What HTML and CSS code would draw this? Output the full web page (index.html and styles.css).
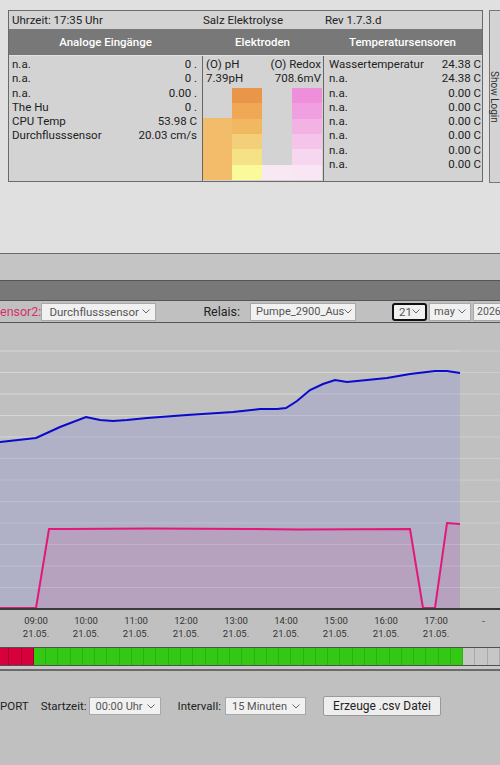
FILE: index.html
```html
<!DOCTYPE html>
<html lang="de">
<head>
    <meta charset="UTF-8">
    <meta name="viewport" content="width=device-width, initial-scale=1.0">
    <title>Salz Elektrolyse</title>
    <link rel="stylesheet" href="styles.css">
</head>
<body>

<div class="top">
    <div class="panel">
        <div class="info">
            <div class="c1">Uhrzeit: 17:35 Uhr</div>
            <div class="c2">Salz Elektrolyse</div>
            <div class="c3">Rev 1.7.3.d</div>
        </div>
        <div class="heads">
            <div>Analoge Eingänge</div>
            <div>Elektroden</div>
            <div>Temperatursensoren</div>
        </div>
        <div class="body">
            <div class="col analog">
                <div class="row"><span>n.a.</span><span>0 .</span></div>
                <div class="row"><span>n.a.</span><span>0 .</span></div>
                <div class="row"><span>n.a.</span><span>0.00 .</span></div>
                <div class="row"><span>The Hu</span><span>0 .</span></div>
                <div class="row"><span>CPU Temp</span><span>53.98 C</span></div>
                <div class="row"><span>Durchflusssensor</span><span>20.03 cm/s</span></div>
            </div>
            <div class="col electro">
                <div class="row"><span>(O) pH</span><span>(O) Redox</span></div>
                <div class="row"><span>7.39pH</span><span>708.6mV</span></div>
                <div class="bars">
                    <div class="value ph" style="height: 62px"></div>
                    <div class="scale">
                        <div class="ph1"></div><div class="ph2"></div><div class="ph3"></div>
                        <div class="ph4"></div><div class="ph5"></div><div class="ph6"></div>
                    </div>
                    <div class="value rx" style="height: 15px"></div>
                    <div class="scale">
                        <div class="rx1"></div><div class="rx2"></div><div class="rx3"></div>
                        <div class="rx4"></div><div class="rx5"></div><div class="rx6"></div>
                    </div>
                </div>
            </div>
            <div class="col temp">
                <div class="row"><span>Wassertemperatur</span><span>24.38 C</span></div>
                <div class="row"><span>n.a.</span><span>24.38 C</span></div>
                <div class="row"><span>n.a.</span><span>0.00 C</span></div>
                <div class="row"><span>n.a.</span><span>0.00 C</span></div>
                <div class="row"><span>n.a.</span><span>0.00 C</span></div>
                <div class="row"><span>n.a.</span><span>0.00 C</span></div>
                <div class="row"><span>n.a.</span><span>0.00 C</span></div>
                <div class="row"><span>n.a.</span><span>0.00 C</span></div>
            </div>
        </div>
    </div>
    <div class="login">Show Login</div>
</div>

<div class="band1"></div>
<div class="band2"></div>

<div class="toolbar">
    <span class="sensor-label">ensor2:</span>
    <div class="select sel-sensor"><span>Durchflusssensor</span><svg width="8" height="5"><polyline points="0.5,0.5 4,4 7.5,0.5"/></svg></div>
    <span class="relais-label">Relais:</span>
    <div class="select sel-relais"><span>Pumpe_2900_Aus</span><svg width="8" height="5"><polyline points="0.5,0.5 4,4 7.5,0.5"/></svg></div>
    <div class="select sel-day"><span>21</span><svg width="8" height="5"><polyline points="0.5,0.5 4,4 7.5,0.5"/></svg></div>
    <div class="select sel-month"><span>may</span><svg width="8" height="5"><polyline points="0.5,0.5 4,4 7.5,0.5"/></svg></div>
    <div class="select sel-year"><span>2026</span></div>
</div>

<svg class="chart" width="500" height="287" viewBox="0 0 500 287">
    <g class="grid">
        <line x1="0" y1="28" x2="500" y2="28"/>
        <line x1="0" y1="49.5" x2="500" y2="49.5"/>
        <line x1="0" y1="71" x2="500" y2="71"/>
        <line x1="0" y1="92.5" x2="500" y2="92.5"/>
        <line x1="0" y1="114" x2="500" y2="114"/>
        <line x1="0" y1="135.5" x2="500" y2="135.5"/>
        <line x1="0" y1="157" x2="500" y2="157"/>
        <line x1="0" y1="178.5" x2="500" y2="178.5"/>
        <line x1="0" y1="200" x2="500" y2="200"/>
        <line x1="0" y1="221.5" x2="500" y2="221.5"/>
        <line x1="0" y1="243" x2="500" y2="243"/>
        <line x1="0" y1="264.5" x2="500" y2="264.5"/>
    </g>
    <polygon class="fill-blue" points="0,119 36,115 60,104 86,94 100,97 113,98 127,97 147,95 187,92 233,89 260,86 277,86 286,85 297,78 310,67 323,61 335,57 347,59 367,57 387,55 410,51 435,48 447,48 460,50 460,286 0,286"/>
    <polygon class="fill-pink" points="0,286 36,286 49,206 67,206 150,205.5 250,206 300,206.5 410,206 423,286 435,286 447,200 460,201 460,286"/>
    <g class="grid grid-over">
        <line x1="0" y1="28" x2="460" y2="28"/>
        <line x1="0" y1="49.5" x2="460" y2="49.5"/>
        <line x1="0" y1="71" x2="460" y2="71"/>
        <line x1="0" y1="92.5" x2="460" y2="92.5"/>
        <line x1="0" y1="114" x2="460" y2="114"/>
        <line x1="0" y1="135.5" x2="460" y2="135.5"/>
        <line x1="0" y1="157" x2="460" y2="157"/>
        <line x1="0" y1="178.5" x2="460" y2="178.5"/>
        <line x1="0" y1="200" x2="460" y2="200"/>
        <line x1="0" y1="221.5" x2="460" y2="221.5"/>
        <line x1="0" y1="243" x2="460" y2="243"/>
        <line x1="0" y1="264.5" x2="460" y2="264.5"/>
    </g>
    <polyline class="line-blue" points="0,119 36,115 60,104 86,94 100,97 113,98 127,97 147,95 187,92 233,89 260,86 277,86 286,85 297,78 310,67 323,61 335,57 347,59 367,57 387,55 410,51 435,48 447,48 460,50"/>
    <polyline class="line-pink" points="0,285 36,285 49,206 67,206 150,205.5 250,206 300,206.5 410,206 423,285 435,285 447,200 460,201"/>
    <line class="baseline" x1="0" y1="286" x2="500" y2="286"/>
</svg>

<div class="axis">
    <div class="tick"><span>09:00</span><span>21.05.</span></div>
    <div class="tick"><span>10:00</span><span>21.05.</span></div>
    <div class="tick"><span>11:00</span><span>21.05.</span></div>
    <div class="tick"><span>12:00</span><span>21.05.</span></div>
    <div class="tick"><span>13:00</span><span>21.05.</span></div>
    <div class="tick"><span>14:00</span><span>21.05.</span></div>
    <div class="tick"><span>15:00</span><span>21.05.</span></div>
    <div class="tick"><span>16:00</span><span>21.05.</span></div>
    <div class="tick"><span>17:00</span><span>21.05.</span></div>
    <div class="tick tick-end"><span>-</span></div>
</div>

<div class="status" id="status"></div>
<div class="sep"></div>

<div class="export">
    <span>PORT</span>
    <span class="start-label">Startzeit:</span>
    <div class="select sel-start"><span>00:00 Uhr</span><svg width="8" height="5"><polyline points="0.5,0.5 4,4 7.5,0.5"/></svg></div>
    <span class="interval-label">Intervall:</span>
    <div class="select sel-interval"><span>15 Minuten</span><svg width="8" height="5"><polyline points="0.5,0.5 4,4 7.5,0.5"/></svg></div>
    <button class="csv">Erzeuge .csv Datei</button>
</div>

<script>
    // 15-minute pump states: 0 = off, 1 = on, 2 = no data yet
    const states = [0, 0, 0];
    for (let i = 0; i < 35; i++) states.push(1);
    states.push(2, 2, 2);

    const status = document.getElementById('status');
    states.forEach(s => {
        const cell = document.createElement('div');
        cell.className = 'cell ' + (s === 0 ? 'off' : s === 1 ? 'on' : 'none');
        status.appendChild(cell);
    });
</script>

</body>
</html>
```

FILE: styles.css
```css
* {
    box-sizing: border-box;
}
html, body {
    margin: 0;
    overflow: hidden;
}
body {
    width: 500px;
    font-family: Roboto, "Noto Sans", sans-serif;
    font-size: 11.5px;
    color: #222;
    background-color: #c0c0c0;
}

/* top status panel */
.top {
    height: 253px;
    padding-top: 10px;
    display: flex;
    align-items: flex-start;
    overflow: hidden;
    background-color: #e0e0e0;
}
.panel {
    margin-left: 8px;
    width: 475px;
    flex-shrink: 0;
    border: 1px solid #6a6a6a;
    background-color: #d3d3d3;
}
.info, .heads, .body {
    display: grid;
    grid-template-columns: 193px 121px 1fr;
}
.info {
    height: 18px;
    line-height: 18px;
}
.info .c1 { padding-left: 3px; }
.info .c2 { padding-left: 1px; }
.info .c3 { padding-left: 2px; }
.heads {
    height: 26px;
    line-height: 26px;
    background-color: #787878;
    color: #fff;
    font-weight: 500;
    text-align: center;
}
.body {
    height: 126px;
    border-top: 1px solid #e2e2e2;
}
.row {
    display: flex;
    justify-content: space-between;
    line-height: 14.3px;
    white-space: nowrap;
}
.col {
    padding-top: 1px;
}
.analog {
    padding-left: 3px;
    padding-right: 5px;
}
.electro {
    display: flex;
    flex-direction: column;
    border-left: 1px solid #666;
    padding-bottom: 1px;
}
.electro .row {
    padding: 0 2px 0 3px;
}
.temp {
    border-left: 1px solid #666;
    padding-left: 5px;
    padding-right: 1px;
}
.bars {
    margin-top: auto;
    height: 92px;
    display: grid;
    grid-template-columns: 29px 30px 30px 30px;
    align-items: end;
}
.scale {
    height: 92px;
    display: flex;
    flex-direction: column;
}
.scale div {
    flex: 1;
}
.value.ph { background-color: #f2bc6b; }
.value.rx { background-color: #f8e8f4; }
.ph1 { background-color: #e9954a; }
.ph2 { background-color: #f0a855; }
.ph3 { background-color: #f1b862; }
.ph4 { background-color: #f2cf78; }
.ph5 { background-color: #f5e286; }
.ph6 { background-color: #fafa9a; }
.rx1 { background-color: #ef8fdc; }
.rx2 { background-color: #f0a0e0; }
.rx3 { background-color: #f2b2e4; }
.rx4 { background-color: #f5c4ea; }
.rx5 { background-color: #f7d6ef; }
.rx6 { background-color: #f8e6f4; }

.login {
    margin-left: 6px;
    width: 11px;
    height: 173px;
    flex-shrink: 0;
    border: 1px solid #777;
    border-right: 0;
    background-color: #d3d3d3;
    writing-mode: vertical-rl;
    text-align: center;
    line-height: 11px;
    font-size: 10px;
    color: #333;
}

/* grey bands */
.band1 {
    height: 28px;
    border-top: 1px solid #6a6a6a;
    border-bottom: 1px solid #555;
    background-color: #c4c4c4;
}
.band2 {
    height: 19px;
    background-color: #787878;
}

/* chart controls */
.toolbar {
    height: 23px;
    display: flex;
    align-items: center;
    border-top: 1px solid #555;
    border-bottom: 1px solid #555;
    font-size: 12.5px;
    white-space: nowrap;
}
.sensor-label {
    width: 42px;
    color: #d6306e;
}
.select {
    height: 18px;
    display: flex;
    align-items: center;
    justify-content: space-between;
    padding: 0 5px 0 6px;
    border: 1px solid #a8a8a8;
    background-color: #f1f1f1;
    color: #555;
    font-size: 11.5px;
    overflow: hidden;
    flex-shrink: 0;
}
.select svg {
    flex-shrink: 0;
    fill: none;
    stroke: #666;
    stroke-width: 1;
}
.sel-sensor {
    width: 115px;
    padding-left: 7px;
}
.relais-label { margin-left: 47px; }
.sel-relais {
    margin-left: 10px;
    width: 106px;
    padding-left: 5px;
    padding-right: 3px;
    overflow: visible;
}
.sel-relais span {
    font-size: 11px;
}
.sel-relais svg {
    margin-left: -5px;
}
.sel-day {
    margin-left: 36px;
    width: 35px;
    border: 2px solid #111;
    border-radius: 3px;
    padding-left: 5px;
}
.sel-month {
    margin-left: 2px;
    width: 42px;
    padding-left: 4px;
    padding-right: 4px;
}
.sel-month span {
    font-size: 11px;
}
.sel-year {
    margin-left: 2px;
    width: 28px;
    padding-left: 3px;
    padding-right: 0;
    border-right: 0;
    overflow: visible;
}
.sel-year span {
    font-size: 10.5px;
}

/* chart */
.chart {
    display: block;
    background-color: #c0c0c0;
}
.grid line {
    stroke: #cdcdcd;
    stroke-width: 1;
}
.grid-over line {
    stroke: rgba(255, 255, 255, 0.18);
}
.fill-blue { fill: #b0b0c7; }
.fill-pink { fill: #b6a2be; }
.line-blue {
    fill: none;
    stroke: #0a0acc;
    stroke-width: 2;
}
.line-pink {
    fill: none;
    stroke: #e2187a;
    stroke-width: 2;
}
.baseline {
    stroke: #3a3a3a;
    stroke-width: 2;
}

.axis {
    height: 37px;
    display: flex;
    padding: 4px 0 0 11px;
    font-size: 9.5px;
    color: #333;
}
.tick {
    width: 50px;
    flex-shrink: 0;
    display: flex;
    flex-direction: column;
    align-items: center;
    line-height: 13px;
}
.tick-end {
    width: 45px;
}

/* pump status strip */
.status {
    display: flex;
    margin-left: -3px;
    width: 503px;
    height: 19px;
    border-top: 1px solid #505050;
    border-bottom: 1px solid #505050;
}
.cell {
    flex: 1;
    border-right: 1px solid rgba(0, 0, 0, 0.12);
}
.cell.off { background-color: #d8003c; border-right-color: #a00028; }
.cell.on { background-color: #33c814; }
.cell.none { background-color: #c6c6c6; border-right-color: #aaa; }
.sep {
    height: 5px;
    background-color: #c9c9c9;
    border-bottom: 2px solid #6a6a6a;
}

/* csv export */
.export {
    display: flex;
    align-items: center;
    padding-top: 25px;
    font-size: 11.5px;
    white-space: nowrap;
}
.start-label { margin-left: 12px; }
.sel-start {
    margin-left: 2px;
    width: 72px;
}
.interval-label { margin-left: 17px; }
.sel-interval {
    margin-left: 4px;
    width: 81px;
}
.sel-start span, .sel-interval span {
    font-size: 11px;
}
.csv {
    margin-left: 17px;
    width: 118px;
    height: 20px;
    padding: 0;
    border: 1px solid #999;
    border-radius: 2px;
    background-color: #eee;
    color: #222;
    font-family: Roboto, "Noto Sans", sans-serif;
    font-size: 12px;
}
```
